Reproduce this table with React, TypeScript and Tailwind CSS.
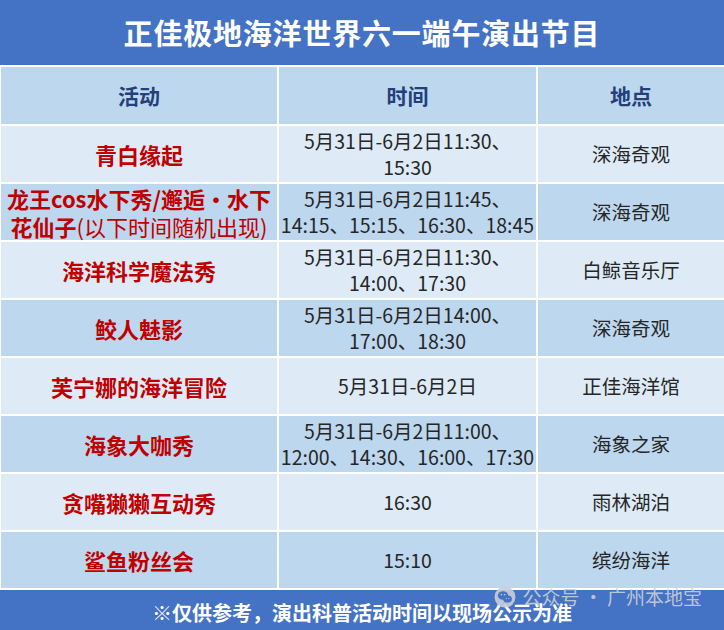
import React from "react";

type Show = {
  name: React.ReactNode;
  time: string[];
  place: string;
};

const shows: Show[] = [
  { name: "青白缘起", time: ["5月31日-6月2日11:30、", "15:30"], place: "深海奇观" },
  {
    name: (
      <span className="leading-[28px] whitespace-nowrap">
        龙王cos水下秀/邂逅•水下
        <br />
        花仙子<span className="font-normal">(以下时间随机出现)</span>
      </span>
    ),
    time: ["5月31日-6月2日11:45、", "14:15、15:15、16:30、18:45"],
    place: "深海奇观",
  },
  { name: "海洋科学魔法秀", time: ["5月31日-6月2日11:30、", "14:00、17:30"], place: "白鲸音乐厅" },
  { name: "鲛人魅影", time: ["5月31日-6月2日14:00、", "17:00、18:30"], place: "深海奇观" },
  { name: "芙宁娜的海洋冒险", time: ["5月31日-6月2日"], place: "正佳海洋馆" },
  { name: "海象大咖秀", time: ["5月31日-6月2日11:00、", "12:00、14:30、16:00、17:30"], place: "海象之家" },
  { name: "贪嘴獭獭互动秀", time: ["16:30"], place: "雨林湖泊" },
  { name: "鲨鱼粉丝会", time: ["15:10"], place: "缤纷海洋" },
];

function WatermarkIcon() {
  return (
    <svg width="22" height="22" viewBox="0 0 22 22">
      <circle cx="11" cy="11" r="10.5" fill="#c9ced8" />
      <ellipse cx="9" cy="9.5" rx="5.2" ry="4.3" fill="#4472c4" />
      <ellipse cx="13.5" cy="13" rx="4.4" ry="3.6" fill="#4472c4" />
      <circle cx="7.4" cy="8.6" r="0.9" fill="#c9ced8" />
      <circle cx="10.6" cy="8.6" r="0.9" fill="#c9ced8" />
      <circle cx="12.2" cy="12.6" r="0.7" fill="#c9ced8" />
      <circle cx="14.8" cy="12.6" r="0.7" fill="#c9ced8" />
    </svg>
  );
}

export default function App() {
  return (
    <div
      className="w-[724px] h-[630px] bg-white overflow-hidden flex flex-col gap-[2px]"
      style={{ fontFamily: '"Noto Sans CJK SC", "Noto Sans", sans-serif' }}
    >
      {/* Title */}
      <div className="h-[65px] bg-[#4472c4] flex items-center justify-center">
        <h1 className="text-[29px] font-bold text-white tracking-[0.8px]">
          正佳极地海洋世界六一端午演出节目
        </h1>
      </div>

      {/* Table */}
      <div className="grid grid-cols-[276px_257px_186px] grid-rows-[57px_repeat(8,56px)] gap-[2px] pl-[1px]">
        {["活动", "时间", "地点"].map((h) => (
          <div
            key={h}
            className="bg-[#bdd7ee] flex items-center justify-center text-[21px] font-bold text-[#243f7a]"
          >
            {h}
          </div>
        ))}

        {shows.map((s, i) => {
          const bg = i % 2 === 0 ? "bg-[#deebf7]" : "bg-[#bdd7ee]";
          return (
            <React.Fragment key={i}>
              <div
                className={`${bg} flex items-center justify-center text-center text-[22px] font-bold text-[#c00000]`}
              >
                {s.name}
              </div>
              <div
                className={`${bg} flex flex-col items-center justify-center text-[19.5px] leading-[26px] text-[#262626]`}
              >
                {s.time.map((t) => (
                  <span key={t} className="whitespace-nowrap">
                    {t}
                  </span>
                ))}
              </div>
              <div className={`${bg} flex items-center justify-center text-[19.5px] text-[#262626]`}>
                {s.place}
              </div>
            </React.Fragment>
          );
        })}
      </div>

      {/* Footer */}
      <div className="relative flex-1 bg-[#4472c4] flex items-center justify-center">
        <p className="text-[20px] font-bold text-white pt-[6px]">
          ※仅供参考，演出科普活动时间以现场公示为准
        </p>
        <div className="absolute right-[22px] top-[-7px] flex items-center gap-[6px] text-[19px] text-[#c9ced8] opacity-90">
          <WatermarkIcon />
          <span>公众号 · 广州本地宝</span>
        </div>
      </div>
    </div>
  );
}
